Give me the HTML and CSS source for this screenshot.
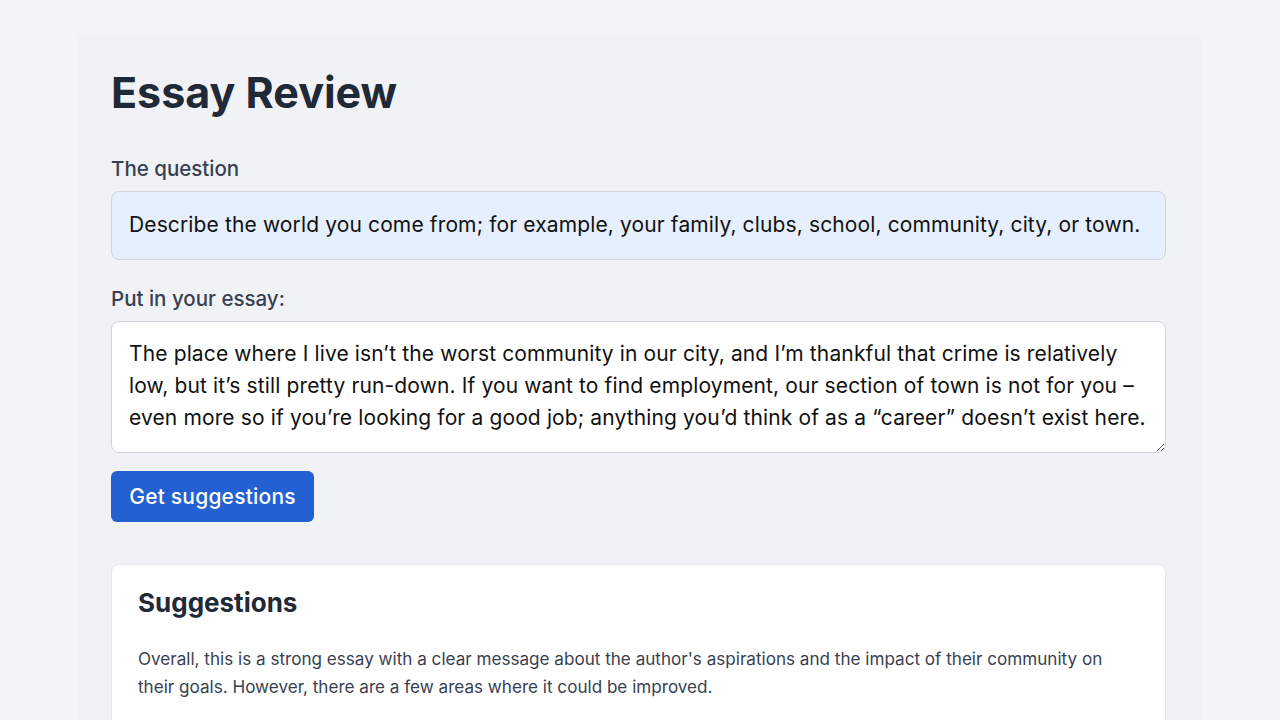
FILE: index.html
```html
<!DOCTYPE html>
<html lang="en">
<head>
  <meta charset="UTF-8">
  <meta name="viewport" content="width=device-width, initial-scale=1.0">
  <title>Essay Review</title>
  <link rel="stylesheet" href="styles.css">
</head>
<body>
  <main class="page">
    <h1 class="title">Essay Review</h1>

    <label class="label">The question</label>
    <div class="question">Describe the world you come from; for example, your family, clubs, school, community, city, or town.</div>

    <label class="label" for="essay">Put in your essay:</label>
    <textarea id="essay" class="essay" rows="3">The place where I live isn’t the worst community in our city, and I’m thankful that crime is relatively low, but it’s still pretty run-down. If you want to find employment, our section of town is not for you – even more so if you’re looking for a good job; anything you’d think of as a “career” doesn’t exist here.</textarea>

    <button class="btn">Get suggestions</button>

    <section class="card">
      <h2 class="card-title">Suggestions</h2>
      <p class="card-text">Overall, this is a strong essay with a clear message about the author's aspirations and the impact of their community on their goals. However, there are a few areas where it could be improved.</p>
    </section>
  </main>
</body>
</html>
```

FILE: styles.css
```css
* { margin: 0; padding: 0; box-sizing: border-box; }
body {
  background: #f3f4f6;
  font-family: Inter, 'Noto Sans', sans-serif;
  color: #1f2937;
}
.page {
  width: 1124px; margin: 34px auto 0; padding: 30px 36px 40px 33px;
  background: #f1f2f5;
  display: flex; flex-direction: column;
}
.title {
  font-size: 43px; font-weight: 700; color: #1f2937;
  line-height: 56px; margin-bottom: 35px;
}
.label {
  display: block; font-size: 20.5px; font-weight: 500; color: #374151;
  line-height: 28px; margin-bottom: 8px;
}
.question {
  background: #e6effd; border: 1px solid #d1d5db; border-radius: 8px;
  padding: 17px 17px 18px; font-size: 21px; letter-spacing: 0.13px;
  line-height: 32px; color: #111;
  margin-bottom: 25px;
}
.essay {
  display: block; width: 100%; height: 132px;
  background: #fff; border: 1px solid #d1d5db; border-radius: 8px;
  padding: 16px 17px; font-family: inherit; font-size: 21px; letter-spacing: 0.13px;
  line-height: 32px; color: #111; resize: vertical; margin-bottom: 18px;
}
.btn {
  align-self: flex-start;
  background: #2361d3; color: #fff; border: none; border-radius: 6px;
  font-family: inherit; font-size: 21px; letter-spacing: 0.2px; font-weight: 500;
  width: 203px; height: 51px; cursor: pointer; margin-bottom: 42px;
}
.card {
  background: #fff; border: 1px solid #e5e7eb; border-radius: 8px;
  padding: 22px 26px 26px;
}
.card-title {
  font-size: 26px; font-weight: 700; color: #1f2937; line-height: 32px;
  margin-bottom: 26px;
}
.card-text { font-size: 17.1px; line-height: 28px; color: #374151; }
```
